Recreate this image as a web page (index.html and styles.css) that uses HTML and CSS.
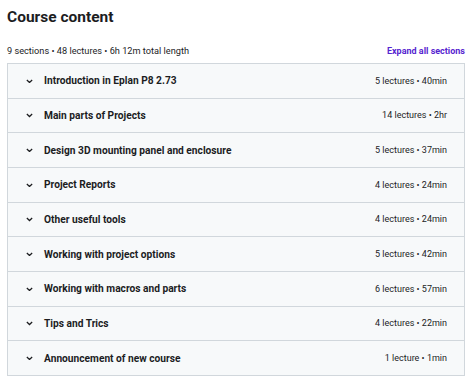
FILE: index.html
```html
<!DOCTYPE html>
<html lang="en">
<head>
    <meta charset="UTF-8">
    <title>Course content</title>
    <link rel="stylesheet" href="styles.css">
</head>
<body>
    <div class="curriculum">
        <h2 class="curriculum-title">Course content</h2>

        <div class="curriculum-meta">
            <span>9 sections • 48 lectures • 6h 12m total length</span>
            <button class="expand-all">Expand all sections</button>
        </div>

        <div class="section-list">
            <div class="section-row">
                <div class="section-left">
                    <svg class="chevron" viewBox="0 0 10 6"><path d="M1.2 1.2 L5 4.8 L8.8 1.2" /></svg>
                    <span class="section-name">Introduction in Eplan P8 2.73</span>
                </div>
                <span class="section-info">5 lectures • 40min</span>
            </div>
            <div class="section-row">
                <div class="section-left">
                    <svg class="chevron" viewBox="0 0 10 6"><path d="M1.2 1.2 L5 4.8 L8.8 1.2" /></svg>
                    <span class="section-name">Main parts of Projects</span>
                </div>
                <span class="section-info">14 lectures • 2hr</span>
            </div>
            <div class="section-row">
                <div class="section-left">
                    <svg class="chevron" viewBox="0 0 10 6"><path d="M1.2 1.2 L5 4.8 L8.8 1.2" /></svg>
                    <span class="section-name">Design 3D mounting panel and enclosure</span>
                </div>
                <span class="section-info">5 lectures • 37min</span>
            </div>
            <div class="section-row">
                <div class="section-left">
                    <svg class="chevron" viewBox="0 0 10 6"><path d="M1.2 1.2 L5 4.8 L8.8 1.2" /></svg>
                    <span class="section-name">Project Reports</span>
                </div>
                <span class="section-info">4 lectures • 24min</span>
            </div>
            <div class="section-row">
                <div class="section-left">
                    <svg class="chevron" viewBox="0 0 10 6"><path d="M1.2 1.2 L5 4.8 L8.8 1.2" /></svg>
                    <span class="section-name">Other useful tools</span>
                </div>
                <span class="section-info">4 lectures • 24min</span>
            </div>
            <div class="section-row">
                <div class="section-left">
                    <svg class="chevron" viewBox="0 0 10 6"><path d="M1.2 1.2 L5 4.8 L8.8 1.2" /></svg>
                    <span class="section-name">Working with project options</span>
                </div>
                <span class="section-info">5 lectures • 42min</span>
            </div>
            <div class="section-row">
                <div class="section-left">
                    <svg class="chevron" viewBox="0 0 10 6"><path d="M1.2 1.2 L5 4.8 L8.8 1.2" /></svg>
                    <span class="section-name">Working with macros and parts</span>
                </div>
                <span class="section-info">6 lectures • 57min</span>
            </div>
            <div class="section-row">
                <div class="section-left">
                    <svg class="chevron" viewBox="0 0 10 6"><path d="M1.2 1.2 L5 4.8 L8.8 1.2" /></svg>
                    <span class="section-name">Tips and Trics</span>
                </div>
                <span class="section-info">4 lectures • 22min</span>
            </div>
            <div class="section-row">
                <div class="section-left">
                    <svg class="chevron" viewBox="0 0 10 6"><path d="M1.2 1.2 L5 4.8 L8.8 1.2" /></svg>
                    <span class="section-name">Announcement of new course</span>
                </div>
                <span class="section-info">1 lecture • 1min</span>
            </div>
        </div>
    </div>
</body>
</html>
```

FILE: styles.css
```css
/* Course content */
body {
    margin: 0;
    background: white;
    font-family: Roboto, 'Liberation Sans', sans-serif;
    color: #1c1d1f;
}

.curriculum {
    padding: 7px 9px 0 7px;
}

.curriculum-title {
    font-size: 15.5px;
    font-weight: 700;
    margin: 0;
    line-height: 20px;
}

.curriculum-meta {
    display: flex;
    align-items: center;
    justify-content: space-between;
    font-size: 9.2px;
    margin-top: 18px;
    margin-bottom: 6px;
    line-height: 12px;
}

.expand-all {
    background: none;
    border: none;
    padding: 0;
    font-family: inherit;
    font-size: 9px;
    font-weight: 700;
    color: #5624d0;
    cursor: pointer;
}

/* Section list */
.section-list {
    border: 1px solid #d1d7dc;
    border-bottom: none;
    background: #f7f9fa;
}

.section-row {
    display: flex;
    align-items: center;
    justify-content: space-between;
    height: 33.67px;
    border-bottom: 1px solid #d1d7dc;
    padding: 0 17px 0 18px;
}

.section-left {
    display: flex;
    align-items: center;
    gap: 11px;
}

.chevron {
    width: 7px;
    height: 4.5px;
    fill: none;
    stroke: #1c1d1f;
    stroke-width: 1.8;
}

.section-name {
    font-size: 10.2px;
    font-weight: 700;
}

.section-info {
    font-size: 9px;
}
```
